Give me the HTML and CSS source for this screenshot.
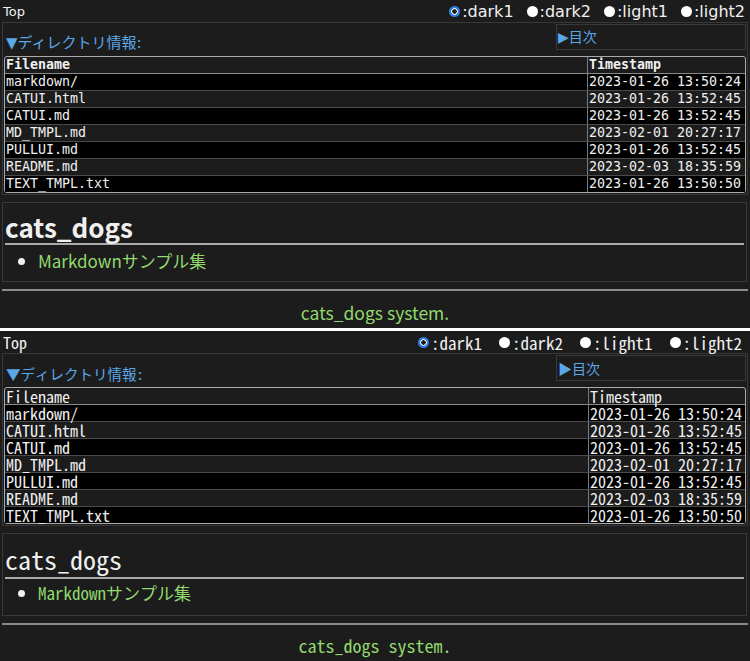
FILE: index.html
```html
<!DOCTYPE html>
<html lang="ja">
<head>
<meta charset="utf-8">
<title>cats_dogs</title>
<link rel="stylesheet" href="styles.css">
</head>
<body>
<div class="panel p1">
  <header class="topbar">
    <a class="home" href="#">Top</a>
    <div class="themes">
      <label class="theme"><input class="radio" type="radio" name="t1" checked><span>:dark1</span></label>
      <label class="theme"><input class="radio" type="radio" name="t1"><span>:dark2</span></label>
      <label class="theme"><input class="radio" type="radio" name="t1"><span>:light1</span></label>
      <label class="theme"><input class="radio" type="radio" name="t1"><span>:light2</span></label>
    </div>
  </header>
  <section class="dir">
    <div class="dir-head">
      <div class="dir-title">▼ディレクトリ情報:</div>
      <div class="toc">▶目次</div>
    </div>
    <table class="files">
      <thead><tr><th class="fn">Filename</th><th class="ts">Timestamp</th></tr></thead>
      <tbody>
        <tr><td class="fn">markdown/</td><td class="ts">2023-01-26 13:50:24</td></tr>
        <tr><td class="fn">CATUI.html</td><td class="ts">2023-01-26 13:52:45</td></tr>
        <tr><td class="fn">CATUI.md</td><td class="ts">2023-01-26 13:52:45</td></tr>
        <tr><td class="fn">MD_TMPL.md</td><td class="ts">2023-02-01 20:27:17</td></tr>
        <tr><td class="fn">PULLUI.md</td><td class="ts">2023-01-26 13:52:45</td></tr>
        <tr><td class="fn">README.md</td><td class="ts">2023-02-03 18:35:59</td></tr>
        <tr><td class="fn">TEXT_TMPL.txt</td><td class="ts">2023-01-26 13:50:50</td></tr>
      </tbody>
    </table>
  </section>
  <section class="readme">
    <h1>cats_dogs</h1>
    <ul><li>Markdownサンプル集</li></ul>
  </section>
  <hr class="rule">
  <footer class="foot">cats_dogs system.</footer>
</div>
<div class="divider"></div>
<div class="panel p2">
  <header class="topbar">
    <a class="home" href="#">Top</a>
    <div class="themes">
      <label class="theme"><input class="radio" type="radio" name="t2" checked><span>:dark1</span></label>
      <label class="theme"><input class="radio" type="radio" name="t2"><span>:dark2</span></label>
      <label class="theme"><input class="radio" type="radio" name="t2"><span>:light1</span></label>
      <label class="theme"><input class="radio" type="radio" name="t2"><span>:light2</span></label>
    </div>
  </header>
  <section class="dir">
    <div class="dir-head">
      <div class="dir-title">▼ディレクトリ情報:</div>
      <div class="toc">▶目次</div>
    </div>
    <table class="files">
      <thead><tr><th class="fn">Filename</th><th class="ts">Timestamp</th></tr></thead>
      <tbody>
        <tr><td class="fn">markdown/</td><td class="ts">2023-01-26 13:50:24</td></tr>
        <tr><td class="fn">CATUI.html</td><td class="ts">2023-01-26 13:52:45</td></tr>
        <tr><td class="fn">CATUI.md</td><td class="ts">2023-01-26 13:52:45</td></tr>
        <tr><td class="fn">MD_TMPL.md</td><td class="ts">2023-02-01 20:27:17</td></tr>
        <tr><td class="fn">PULLUI.md</td><td class="ts">2023-01-26 13:52:45</td></tr>
        <tr><td class="fn">README.md</td><td class="ts">2023-02-03 18:35:59</td></tr>
        <tr><td class="fn">TEXT_TMPL.txt</td><td class="ts">2023-01-26 13:50:50</td></tr>
      </tbody>
    </table>
  </section>
  <section class="readme">
    <h1>cats_dogs</h1>
    <ul><li>Markdownサンプル集</li></ul>
  </section>
  <hr class="rule">
  <footer class="foot">cats_dogs system.</footer>
</div>
</body>
</html>
```
FILE: styles.css
```css
* { box-sizing: border-box; }
html, body { margin: 0; padding: 0; background: #1c1c1c; color: #f0f0f0; }

.panel { height: 328px; overflow: hidden; font-family: "DejaVu Sans", "Noto Sans CJK JP", sans-serif; }
.divider { height: 3px; background: #ffffff; }

.topbar { height: 22px; display: flex; justify-content: space-between; align-items: center; padding: 0 5px 0 3px; }
.home { font-size: 13px; color: #f0f0f0; text-decoration: none; }
.themes { display: flex; align-items: center; gap: 13px; font-size: 16px; }
.theme { display: flex; align-items: center; gap: 2px; }
.radio { appearance: none; -webkit-appearance: none; width: 11px; height: 11px; margin: 0; border-radius: 50%; background: #ffffff; }
.radio:checked { background: radial-gradient(circle, #1c1c1c 0 2px, #ffffff 2.5px 3px, #2f7fe6 3.5px); }

.dir { margin: 0 2px; border: 1px solid #383838; padding: 1px; }
.dir-head { display: flex; justify-content: space-between; align-items: flex-end; }
.dir-title { color: #5aa8e8; font-size: 15px; line-height: 16px; padding-left: 2px; margin-bottom: -1px; }
.toc { width: 190px; height: 26px; border: 1px solid #383838; color: #5aa8e8; font-size: 14px; line-height: 14px; padding: 5px 0 0 1px; }

.files { width: 100%; margin-top: 6px; border-collapse: separate; border-spacing: 0; border: 1px solid #aaaaaa; border-radius: 3px; font-family: "DejaVu Sans Mono", monospace; font-size: 13.3px; line-height: 16px; }
.files th, .files td { padding: 0 1px; text-align: left; white-space: nowrap; border-bottom: 1px solid #4a4a4a; }
.files th { font-weight: bold; border-bottom-color: #8a8a8a; }
.files .fn { border-right: 1px solid #7a7a7a; }
.files .ts { width: 1%; padding: 0 4px 0 1px; }
.files tbody tr:nth-child(odd) td { background: #000000; }
.files tbody tr:last-child td { border-bottom: 0; }

.readme { margin: 7px 3px 0 2px; border: 1px solid #383838; padding: 0 2px; }
.readme h1 { margin: 3px 0 0; padding-top: 4px; font-family: "Noto Sans CJK JP", "Noto Sans", sans-serif; font-size: 26px; line-height: 33px; font-weight: bold; border-bottom: 2px solid #aaaaaa; }
.readme ul { margin: 6px 0 10px; padding-left: 33px; }
.readme li { font-family: "Noto Sans CJK JP", "Noto Sans", sans-serif; font-size: 17px; line-height: 20px; color: #92d86e; }
.readme li::marker { color: #f0f0f0; }

.rule { margin: 7px 2px 0; height: 0; border: 0; border-top: 2px solid #8a8a8a; }
.foot { margin-top: 12px; text-align: center; font-family: "Noto Sans CJK JP", "Noto Sans", sans-serif; font-size: 17.5px; line-height: 20px; color: #92d86e; }

/* second rendering: Japanese monospace face */
.p2 { font-family: "Noto Sans Mono CJK JP", "Liberation Mono", "Noto Sans CJK JP", monospace; }
.p2 .home { font-size: 16px; }
.p2 .themes { font-size: 17px; gap: 17px; }
.p2 .topbar { padding-right: 8px; }
.p2 .dir-title { font-size: 14.5px; }
.p2 .files { font-family: "Noto Sans Mono CJK JP", "Liberation Mono", monospace; font-size: 16px; }
.p2 .files th { font-weight: normal; }
.p2 .files .ts { padding: 0 3px 0 1px; }
.p2 .readme h1 { font-family: "Noto Sans Mono CJK JP", "Liberation Mono", monospace; font-size: 26px; padding-top: 4px; line-height: 36px; font-weight: normal; }
.p2 .readme ul { margin: 4px 0 12px; }
.p2 .readme li { font-family: "Noto Sans Mono CJK JP", "Liberation Mono", monospace; font-size: 17px; }
.p2 .foot { font-family: "Noto Sans Mono CJK JP", "Liberation Mono", monospace; font-size: 18px; margin-top: 10px; }
```
